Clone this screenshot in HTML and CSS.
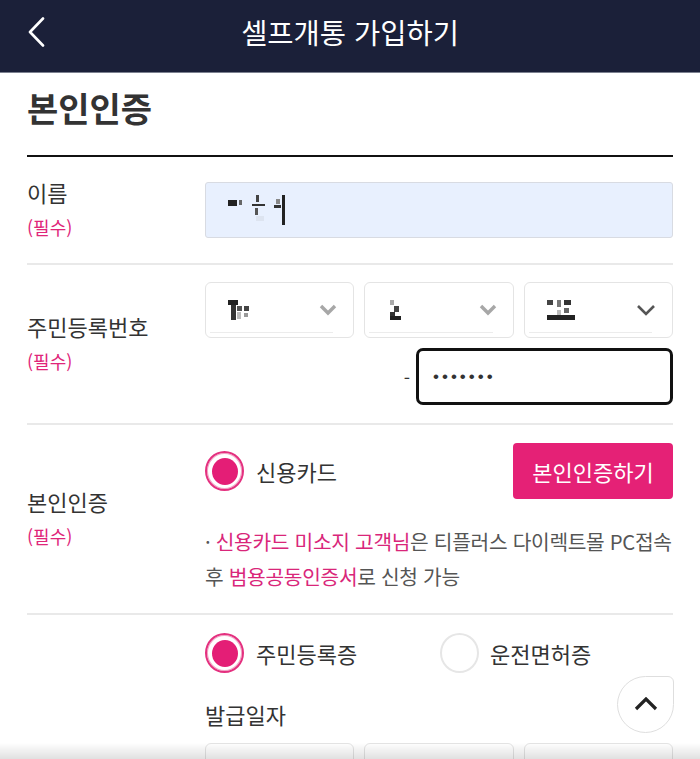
FILE: index.html
```html
<!DOCTYPE html>
<html lang="ko">
<head>
<meta charset="utf-8">
<title>셀프개통 가입하기</title>
<link rel="stylesheet" href="styles.css">
</head>
<body>
<header class="topbar">
  <button class="back" aria-label="뒤로">
    <svg width="18" height="30" viewBox="0 0 18 30"><polyline points="16,1.5 3,15 16,28.5" fill="none" stroke="#fff" stroke-width="2.6" stroke-linecap="round" stroke-linejoin="round"/></svg>
  </button>
  <h1 class="title">셀프개통 가입하기</h1>
</header>

<main class="page">
  <h2 class="section-title">본인인증</h2>

  <div class="form">
    <div class="row">
      <div class="label"><span class="name">이름</span><span class="req">(필수)</span></div>
      <div class="field">
        <div class="input autofill">
          <svg class="mask" width="66" height="32" viewBox="0 0 66 32">
            <rect x="0" y="6" width="9" height="6" fill="#222"/>
            <rect x="11" y="6" width="3" height="5" fill="#666"/>
            <rect x="28" y="1" width="3" height="7" fill="#444"/>
            <rect x="24" y="10" width="13" height="2" fill="#333"/>
            <rect x="27" y="14" width="3" height="7" fill="#555"/>
            <rect x="28" y="22" width="8" height="5" fill="#dde4f0"/>
            <rect x="48" y="5" width="4" height="5" fill="#888"/>
            <rect x="46" y="11" width="7" height="3" fill="#333"/>
            <rect x="54" y="1" width="3" height="30" fill="#222"/>
          </svg>
        </div>
      </div>
    </div>

    <div class="row">
      <div class="label"><span class="name">주민등록번호</span><span class="req">(필수)</span></div>
      <div class="field">
        <div class="selects">
          <div class="select">
            <svg class="mask" width="32" height="22" viewBox="0 0 32 22">
              <rect x="0" y="1" width="10" height="5" fill="#222"/>
              <rect x="3" y="6" width="5" height="15" fill="#333"/>
              <rect x="9" y="7" width="5" height="5" fill="#555"/>
              <rect x="9" y="13" width="4" height="7" fill="#bbb"/>
              <rect x="16" y="7" width="5" height="5" fill="#444"/>
              <rect x="16" y="14" width="4" height="4" fill="#999"/>
            </svg>
            <svg class="chev faint" width="18" height="12" viewBox="0 0 18 12"><polyline points="2,2 9,9 16,2" fill="none" stroke="#8a8a8a" stroke-width="3.4"/></svg>
          </div>
          <div class="select">
            <svg class="mask" width="16" height="22" viewBox="0 0 16 22">
              <rect x="3" y="1" width="4" height="5" fill="#aaa"/>
              <rect x="7" y="7" width="5" height="6" fill="#444"/>
              <rect x="3" y="13" width="5" height="4" fill="#333"/>
              <rect x="3" y="17" width="11" height="4" fill="#222"/>
            </svg>
            <svg class="chev faint" width="18" height="12" viewBox="0 0 18 12"><polyline points="2,2 9,9 16,2" fill="none" stroke="#8a8a8a" stroke-width="3.4"/></svg>
          </div>
          <div class="select">
            <svg class="mask" width="28" height="22" viewBox="0 0 28 22">
              <rect x="0" y="1" width="6" height="5" fill="#444"/>
              <rect x="10" y="1" width="4" height="7" fill="#777"/>
              <rect x="17" y="1" width="7" height="5" fill="#333"/>
              <rect x="17" y="9" width="5" height="5" fill="#666"/>
              <rect x="10" y="11" width="4" height="5" fill="#bbb"/>
              <rect x="0" y="16" width="28" height="5" fill="#222"/>
            </svg>
            <svg class="chev" width="20" height="12" viewBox="0 0 20 12"><polyline points="2,2 10,10 18,2" fill="none" stroke="#555" stroke-width="2.6"/></svg>
          </div>
        </div>
        <div class="back-number">
          <span class="dash">-</span>
          <div class="input password">•••••••</div>
        </div>
      </div>
    </div>

    <div class="row">
      <div class="label"><span class="name">본인인증</span><span class="req">(필수)</span></div>
      <div class="field">
        <div class="auth-line">
          <label class="radio-item"><span class="radio checked"></span><span class="radio-text">신용카드</span></label>
          <button class="primary-btn">본인인증하기</button>
        </div>
        <p class="notice">· <em>신용카드 미소지 고객님</em>은 티플러스 다이렉트몰 PC접속 후 <em>범용공동인증서</em>로 신청 가능</p>
      </div>
    </div>

    <div class="row last">
      <div class="label"></div>
      <div class="field">
        <div class="id-types">
          <label class="radio-item"><span class="radio checked"></span><span class="radio-text">주민등록증</span></label>
          <label class="radio-item"><span class="radio"></span><span class="radio-text">운전면허증</span></label>
        </div>
        <div class="sub-label">발급일자</div>
        <div class="selects">
          <div class="select"></div>
          <div class="select"></div>
          <div class="select"></div>
        </div>
      </div>
    </div>
  </div>
</main>

<button class="to-top" aria-label="맨 위로">
  <svg width="24" height="14" viewBox="0 0 24 14"><polyline points="2,12 12,2 22,12" fill="none" stroke="#222" stroke-width="3.2"/></svg>
</button>
<div class="bottom-shade"></div>
</body>
</html>
```

FILE: styles.css
```css
* { box-sizing: border-box; }

html, body {
  margin: 0;
  padding: 0;
  background: #fff;
  font-family: "Noto Sans CJK KR", "Noto Sans", sans-serif;
  color: #333;
  overflow: hidden;
}

.topbar {
  height: 73px;
  background: #1b2039;
  border-bottom: 1px solid #7c8190;
  display: flex;
  align-items: flex-start;
  position: relative;
}

.back {
  position: absolute;
  left: 27px;
  top: 17px;
  background: none;
  border: 0;
  padding: 0;
  width: 18px;
  height: 30px;
  display: block;
}
.back svg { display: block; }

.title {
  flex: 1;
  margin: 0;
  text-align: center;
  color: #fff;
  font-size: 28.5px;
  font-weight: 400;
  line-height: 64px;
}

.page {
  padding: 0 27px;
}

.section-title {
  margin: 15px 0 27px;
  font-size: 34px;
  line-height: 40px;
  font-weight: 700;
  color: #333;
}

.form {
  border-top: 2px solid #111;
}

.row {
  display: flex;
  align-items: center;
  border-bottom: 2px solid #e9e9e9;
  padding: 18px 0;
}
.row:nth-child(2) { padding: 17px 0 18px; }
.row:nth-child(3) { padding: 18px 0 19px; }
.row.last { padding: 18px 0 0; border-bottom: 0; align-items: flex-start; }

.label {
  width: 178px;
  flex: none;
  display: flex;
  flex-direction: column;
}
.label .name {
  font-size: 22px;
  line-height: 35px;
  color: #333;
}
.label .req {
  font-size: 18px;
  line-height: 35px;
  color: #e0267a;
}

.field {
  flex: 1;
  min-width: 0;
}

.input {
  height: 56px;
  border: 1px solid #d8dbe2;
  border-radius: 3px;
  display: flex;
  align-items: center;
}
.input.autofill {
  background: #e8f0fe;
  padding-left: 22px;
}
.mask { display: block; }

.selects {
  display: grid;
  grid-template-columns: 1fr 1fr 1fr;
  gap: 10px;
}
.select {
  height: 56px;
  border: 1px solid #e4e4e4;
  border-radius: 6px;
  display: flex;
  align-items: center;
  justify-content: space-between;
  padding: 0 16px 0 22px;
  position: relative;
}
.select::after {
  content: "";
  position: absolute;
  left: 4px;
  right: 20px;
  bottom: 4px;
  border-bottom: 1px solid #ececec;
}
.row.last .select::after { display: none; }
.chev.faint { opacity: 0.75; }

.back-number {
  display: flex;
  justify-content: flex-end;
  align-items: center;
  margin-top: 10px;
  gap: 6px;
}
.dash {
  font-size: 18px;
  color: #333;
  line-height: 1;
}
.input.password {
  width: 257px;
  height: 57px;
  border: 3px solid #111;
  border-radius: 7px;
  padding-left: 14px;
  font-family: "Liberation Sans", sans-serif;
  font-size: 17px;
  letter-spacing: 3px;
  color: #333;
}

.auth-line {
  display: flex;
  align-items: center;
  justify-content: space-between;
}

.radio-item {
  display: flex;
  align-items: center;
  gap: 12px;
}
.radio {
  width: 39px;
  height: 40px;
  border-radius: 50%;
  border: 2px solid #e6e6e6;
  display: flex;
  align-items: center;
  justify-content: center;
  background: #fff;
}
.radio.checked {
  border: 2px solid #e4307f;
  box-shadow: inset 0 0 0 1px #f2a6c6;
}
.radio.checked::before {
  content: "";
  width: 26px;
  height: 27px;
  border-radius: 50%;
  background: #e41e76;
}
.radio-text {
  font-size: 22px;
  line-height: 40px;
  color: #333;
}

.primary-btn {
  width: 160px;
  height: 56px;
  border: 0;
  border-radius: 4px;
  background: #e52176;
  color: #fff;
  font-family: inherit;
  font-size: 22px;
  padding: 0;
}

.notice {
  margin: 25px 0 0;
  font-size: 20.3px;
  line-height: 35px;
  color: #555;
  letter-spacing: -0.3px;
  word-break: keep-all;
}
.notice em {
  font-style: normal;
  color: #d9267a;
}

.id-types {
  display: grid;
  grid-template-columns: 235px 1fr;
}
.id-types .radio-item:nth-child(2) { gap: 11px; }

.sub-label {
  margin-top: 24px;
  font-size: 22px;
  line-height: 35px;
  color: #333;
}
.row.last .selects { margin-top: 11px; }

.to-top {
  position: fixed;
  left: 617px;
  top: 676px;
  width: 57px;
  height: 57px;
  border-radius: 50% 6px 50% 50%;
  border: 1.5px solid #dedede;
  background: #fff;
  padding: 0;
  display: flex;
  align-items: center;
  justify-content: center;
}
.to-top svg { display: block; margin-top: -2px; }

.bottom-shade {
  position: fixed;
  left: 0;
  right: 0;
  bottom: 0;
  height: 16px;
  background: linear-gradient(to bottom, rgba(0,0,0,0), rgba(0,0,0,0.12));
  pointer-events: none;
}
```
